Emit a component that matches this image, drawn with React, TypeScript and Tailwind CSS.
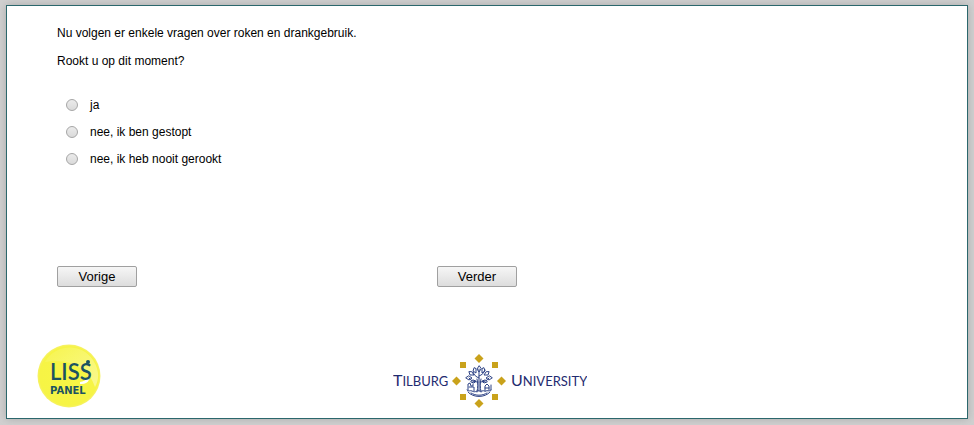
import React from "react";

const options = [
  { id: "ja", label: "ja" },
  { id: "gestopt", label: "nee, ik ben gestopt" },
  { id: "nooit", label: "nee, ik heb nooit gerookt" },
];

const buttonClass =
  "h-[21px] w-20 rounded-[2px] border border-[#a0a0a0] bg-linear-to-b from-[#f6f6f6] to-[#dddddd] text-[13px] leading-4 text-black";

function LissLogo() {
  return (
    <svg className="size-16 shrink-0" viewBox="0 0 64 64" role="img" aria-label="LISS Panel">
      <defs>
        <radialGradient id="ball" cx="50%" cy="50%" r="50%">
          <stop offset="0" stopColor="#f7f645" />
          <stop offset="0.93" stopColor="#f6f445" />
          <stop offset="1" stopColor="#f6f16c" />
        </radialGradient>
        <linearGradient id="shine" x1="0" y1="0" x2="1" y2="1">
          <stop offset="0" stopColor="#fff" stopOpacity="0.05" />
          <stop offset="1" stopColor="#fff" stopOpacity="0.4" />
        </linearGradient>
      </defs>
      <circle cx="32" cy="32" r="31.5" fill="url(#ball)" />
      <path d="M8 18C18 0 44 -2 56 16C64 28 61 38 58 43C53 26 34 13 8 18Z" fill="url(#shine)" />
      <path d="M43 38C50 37 52 33 51 27C55 35 51 41 43 40Z" fill="#fff" />
      <text x="13" y="36" fontFamily="Lato, sans-serif" fontSize="22" fontWeight="600" fill="#1c5361">LISS</text>
      <circle cx="51" cy="18" r="2" fill="#1c5361" />
      <text x="13" y="50" fontFamily="'DejaVu Sans', sans-serif" fontSize="10" fontWeight="700" fill="#1c5361">PANEL</text>
    </svg>
  );
}

function TilburgLogo() {
  return (
    <svg className="h-[54px] w-[194px]" viewBox="0 0 194 54" role="img" aria-label="Tilburg University">
      <g fontFamily="Lato, sans-serif" fill="#1f2b70">
        <text x="0" y="32" fontSize="16">T<tspan fontSize="13">ILBURG</tspan></text>
        <text x="118" y="32" fontSize="16">U<tspan fontSize="13">NIVERSITY</tspan></text>
      </g>
      <g fill="#c9a21b">
        <path d="M86 0l4.5 4.5L86 9l-4.500-4.500z" />
        <path d="M86 45l4.500 4.500L86 54l-4.500-4.500z" />
        <path d="M63.500 22.500L68 27l-4.500 4.500L59 27z" />
        <path d="M108.500 22.500L113 27l-4.500 4.500L104 27z" />
        <path d="M67 8h6v6h-6zM99 8h6v6h-6zM67 40h6v6h-6zM99 40h6v6h-6z" />
      </g>
      <g fill="none" stroke="#2d4285" strokeWidth="1" strokeLinecap="round" strokeLinejoin="round">
        <path d="M84 38c1-5 1-9 0-13M88 38c-1-5-1-9 0-13M86 37V15" />
        <path d="M86 24c-3-1-5-3-6-6M86 22c3-1 5-3 6-6M85 28c-4 0-7-1-9-4M87 28c4 0 7-1 9-4" />
        <path d="M86 12l-2 3 2 3 2-3zM81 14l-1 3 3 2 0-4zM91 14l1 3-3 2v-4zM76 18l1 3 4 0-2-3zM96 18l-1 3-4 0 2-3zM73 24l3 2 3-2-3-2zM99 24l-3 2-3-2 3-2zM78 28l3 1 2-2-3-1zM94 28l-3 1-2-2 3-1z" />
        <path d="M75 36v-6l2-1 1 3h2v-2M76 33h5v4M92 37v-5l2-2 2 2v4M92 34h4M98 36v-5" />
        <path d="M74 36c2 2 3 0 5 1s3 1 5 0 3 1 5 0 3 1 4 0 3 1 5-1" />
        <path d="M75 38c5 6 17 6 22 0M78 39c5 3 11 3 16 0" />
      </g>
    </svg>
  );
}

export default function App() {
  return (
    <div className="min-h-screen bg-[#d0d0d0] px-1.5 pt-[5px] pb-1.5 font-['Liberation_Sans',Arial,sans-serif] text-xs leading-[14px] text-black">
      <main className="border border-[#2b676c] bg-white shadow-[0_0_8px_#aaaaaa]">
        <form className="px-[50px] pt-5" onSubmit={(event) => event.preventDefault()}>
          <p>Nu volgen er enkele vragen over roken en drankgebruik.</p>
          <fieldset className="pt-3.5">
            <legend className="contents">Rookt u op dit moment?</legend>
            <div className="pt-[23px] pl-[9px]">
              {options.map((option) => (
                <div key={option.id} className="flex h-[27px] items-center gap-3">
                  <input
                    id={option.id}
                    type="radio"
                    name="roken"
                    className="size-3 shrink-0 appearance-none rounded-full border border-[#a6a6a6] bg-linear-to-b from-[#ebebeb] to-[#dadada] checked:border-4 checked:border-[#555555]"
                  />
                  <label htmlFor={option.id}>{option.label}</label>
                </div>
              ))}
            </div>
          </fieldset>
          <div className="flex gap-[300px] pt-[94px]">
            <button type="button" className={buttonClass}>Vorige</button>
            <button type="submit" className={buttonClass}>Verder</button>
          </div>
        </form>
        <footer className="flex items-end gap-[292px] px-[30px] pt-[57px] pb-2.5">
          <LissLogo />
          <TilburgLogo />
        </footer>
      </main>
    </div>
  );
}
